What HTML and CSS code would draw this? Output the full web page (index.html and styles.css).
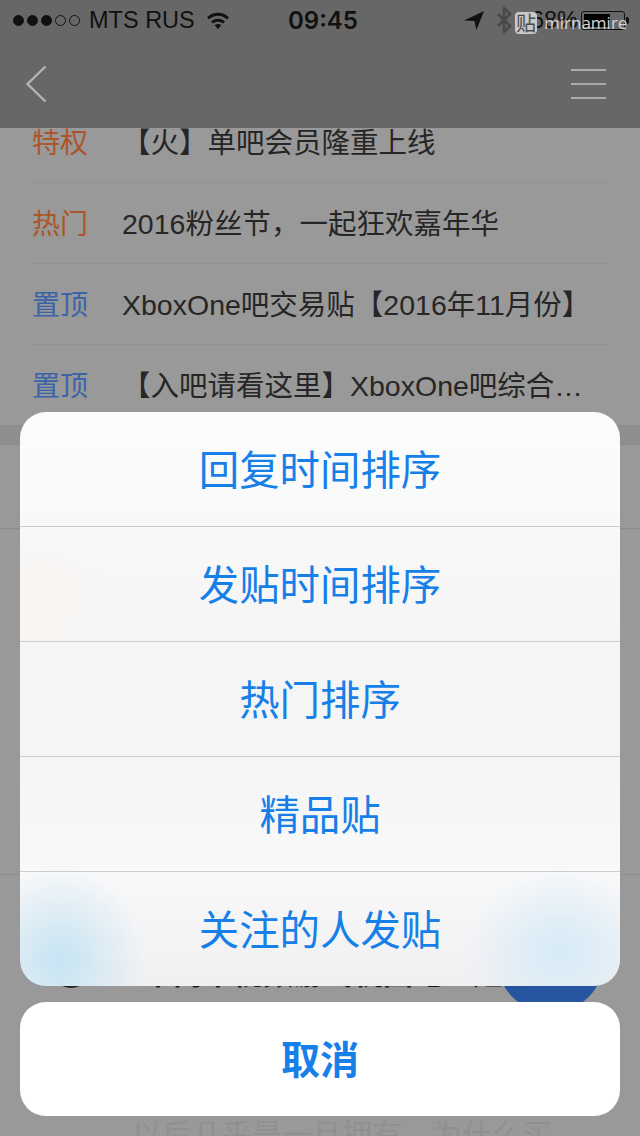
FILE: index.html
```html
<!DOCTYPE html>
<html lang="en">

<head>
    <meta charset="UTF-8">
    <meta name="viewport" content="width=device-width, initial-scale=1.0">
    <title>XboxOne吧</title>
    <link rel="stylesheet" href="styles.css">
</head>

<body>
    <div class="wrap">
        <div class="header">
            <div class="statusBar">
                <div class="carrier">
                    <div class="signal">
                        <i class="on"></i><i class="on"></i><i class="on"></i><i></i><i></i>
                    </div>
                    <span>MTS RUS</span>
                    <svg class="wifi" width="24" height="18" viewBox="0 0 24 18">
                        <path d="M1 6.2C7.4 .4 16.6 .4 23 6.2l-2 2.2C15.6 3.6 8.4 3.6 3 8.4z" fill="#111" />
                        <path d="M5 10.4c4.2-3.7 9.8-3.7 14 0l-2 2.2c-3.1-2.6-6.9-2.6-10 0z" fill="#111" />
                        <path d="M8.6 14.3c2.2-1.7 4.6-1.7 6.8 0L12 18z" fill="#111" />
                    </svg>
                </div>
                <div class="time">09:45</div>
                <div class="sysIcons">
                    <svg class="arrow" width="20" height="19" viewBox="0 0 20 19">
                        <path d="M0 9.5L20 0l-7.6 19-2-9z" fill="#111" />
                    </svg>
                    <svg class="bluetooth" width="16" height="26" viewBox="0 0 16 26">
                        <path d="M2 7l12 12-6 6V1l6 6L2 19" fill="none" stroke="#484848" stroke-width="2.6" />
                    </svg>
                    <span class="percent">68%</span>
                    <div class="battery">
                        <div class="batteryFill"></div>
                    </div>
                    <div class="batteryTip"></div>
                </div>
            </div>
            <div class="navBar">
                <svg width="22" height="38" viewBox="0 0 22 38">
                    <path d="M20.5 1.5L2.5 19l18 17.500" fill="none" stroke="#b4b4b4" stroke-width="2.4" />
                </svg>
                <div class="menuIcon"><i></i><i></i><i></i></div>
            </div>
        </div>

        <div class="content">
            <ul class="topList">
                <li><span class="tag tagHot">特权</span><span class="title">【火】单吧会员隆重上线</span></li>
                <li><span class="tag tagHot">热门</span><span class="title">2016粉丝节，一起狂欢嘉年华</span></li>
                <li><span class="tag">置顶</span><span class="title">XboxOne吧交易贴【2016年11月份】</span></li>
                <li><span class="tag">置顶</span><span class="title">【入吧请看这里】XboxOne吧综合…</span></li>
            </ul>
            <div class="sectionGap"></div>
            <div class="sortRow"></div>
            <div class="post"></div>
            <div class="post postLast">
                <div class="postHead">
                    <span class="avatar"></span>
                    <span class="postTitle">中内中视频游戏机图吧一起</span>
                </div>
                <div class="fab"></div>
                <p class="postText">以后几乎是一旦拥有，为什么买</p>
            </div>
        </div>

        <div class="sheet">
            <div class="sheetGroup">
                <button type="button">回复时间排序</button>
                <button type="button">发贴时间排序</button>
                <button type="button">热门排序</button>
                <button type="button">精品贴</button>
                <button type="button">关注的人发贴</button>
            </div>
            <button type="button" class="cancel">取消</button>
        </div>

        <div class="watermark">
            <span class="markIcon">贴</span>
            <span>mirnamire</span>
        </div>
    </div>
</body>

</html>
```

FILE: styles.css
```css
* {
    padding: 0;
    margin: 0;
    box-sizing: border-box;
}

html,
body {
    width: 100%;
    height: 100%;
}

body {
    font-family: "Liberation Sans", "Noto Sans CJK SC", sans-serif;
}

.wrap {
    position: relative;
    width: 640px;
    height: 1136px;
    overflow: hidden;
    background-color: #999999;
}

.header {
    position: relative;
    z-index: 1;
    height: 128px;
    background-color: #676767;
}

.statusBar {
    height: 40px;
    display: grid;
    grid-template-columns: 1fr auto 1fr;
    align-items: center;
    color: #111111;
}

.carrier {
    display: flex;
    align-items: center;
    padding-left: 13px;
    font-size: 23.5px;
}

.signal {
    display: flex;
    gap: 3px;
    margin-right: 9px;
}

.signal i {
    width: 11px;
    height: 11px;
    border: 1px solid #111111;
    border-radius: 50%;
}

.signal .on {
    background-color: #111111;
}

.wifi {
    margin-left: 11px;
}

.time {
    font-family: Inter, "Liberation Sans", sans-serif;
    font-size: 24px;
    font-weight: 600;
    padding-left: 6px;
}

.sysIcons {
    display: flex;
    align-items: center;
    justify-content: flex-end;
    padding-right: 11px;
    font-size: 23.5px;
}

.bluetooth {
    margin-left: 12px;
}

.percent {
    margin-left: 19px;
}

.battery {
    width: 44px;
    height: 19px;
    margin-left: 3px;
    padding: 2px;
    border: 1px solid #111111;
    border-radius: 3px;
}

.batteryFill {
    width: 68%;
    height: 100%;
    background-color: #000000;
}

.batteryTip {
    width: 3px;
    height: 7px;
    margin-left: 1px;
    background-color: #111111;
    border-radius: 0 2px 2px 0;
}

.navBar {
    height: 88px;
    display: flex;
    align-items: center;
    justify-content: space-between;
    padding: 0 34px 0 25px;
}

.menuIcon {
    width: 35px;
    display: flex;
    flex-direction: column;
    gap: 12px;
}

.menuIcon i {
    height: 2px;
    background-color: #a9a9a9;
}

.content {
    margin-top: -26px;
}

.topList {
    list-style: none;
    padding: 0 32px;
}

.topList li {
    height: 81px;
    display: flex;
    align-items: center;
    padding-bottom: 3px;
    font-size: 28px;
    border-bottom: 1px solid #919191;
    color: #262626;
    white-space: nowrap;
}

.topList li:last-child {
    height: 80px;
    border-bottom: 0;
}

.tag {
    width: 90px;
    color: #3a64a8;
}

.tagHot {
    color: #ab5528;
}

.title {
    font-size: 28.5px;
}

.sectionGap {
    height: 20px;
    background-color: #8e8e8e;
}

.sortRow {
    height: 84px;
    border-bottom: 1px solid #8c8c8c;
}

.post {
    height: 346px;
    border-bottom: 1px solid #8c8c8c;
}

.postLast {
    position: relative;
    height: 270px;
    border-bottom: 0;
    padding: 82px 52px 0;
}

.postHead {
    display: flex;
    align-items: center;
    height: 28px;
    color: #1a1a1a;
    font-size: 30px;
    font-weight: 700;
    white-space: nowrap;
}

.avatar {
    width: 38px;
    height: 38px;
    margin: 0 53px 4px 0;
    border-radius: 50%;
    background-color: #222222;
}

.fab {
    position: absolute;
    left: 497px;
    top: 31px;
    width: 107px;
    height: 107px;
    border-radius: 50%;
    background-color: #25569f;
}

.postText {
    margin: 125px 0 0 80px;
    color: #909090;
    font-size: 30px;
    white-space: nowrap;
}

.sheet {
    position: absolute;
    z-index: 2;
    left: 20px;
    right: 20px;
    top: 412px;
    display: flex;
    flex-direction: column;
    gap: 16px;
}

.sheetGroup {
    height: 574px;
    display: flex;
    flex-direction: column;
    border-radius: 26px;
    overflow: hidden;
    background-color: #f5f6f7;
    background-image:
        radial-gradient(ellipse 85px 95px at 40px 548px, #c6e4f3 0%, rgba(198, 228, 243, 0) 100%),
        radial-gradient(ellipse 95px 85px at 540px 540px, #d5eaf7 0%, rgba(213, 234, 247, 0) 100%),
        radial-gradient(ellipse 90px 80px at 10px 190px, #faf5f1 0%, rgba(250, 245, 241, 0) 100%),
        linear-gradient(180deg, #fbfcfc 0%, #f5f5f6 40%, #f5f5f6 62%, #f9f9fa 80%, #f0f0f2 100%);
}

button {
    background: none;
    border: 0;
    width: 100%;
    height: 115px;
    flex: none;
    padding-bottom: 4px;
    color: #167fe8;
    font-family: "Liberation Sans", "Noto Sans CJK SC", sans-serif;
    font-size: 40.4px;
}

.sheetGroup button {
    border-bottom: 1px solid #c9cbd0;
}

.sheetGroup button:last-child {
    height: 114px;
    border-bottom: 0;
}

.cancel {
    height: 114px;
    background-color: #ffffff;
    border-radius: 26px;
    font-weight: 700;
    font-size: 39px;
}

.watermark {
    position: absolute;
    z-index: 3;
    left: 515px;
    top: 11px;
    display: flex;
    align-items: center;
    gap: 7px;
    color: #d6d6d6;
    font-family: "Open Sans", "Liberation Sans", sans-serif;
    font-size: 17px;
}

.markIcon {
    width: 22px;
    height: 22px;
    display: flex;
    align-items: center;
    justify-content: center;
    border-radius: 4px;
    background-color: #c9c9c9;
    color: #4a4a4a;
    font-family: "Noto Sans CJK SC", sans-serif;
    font-size: 20px;
}
```
